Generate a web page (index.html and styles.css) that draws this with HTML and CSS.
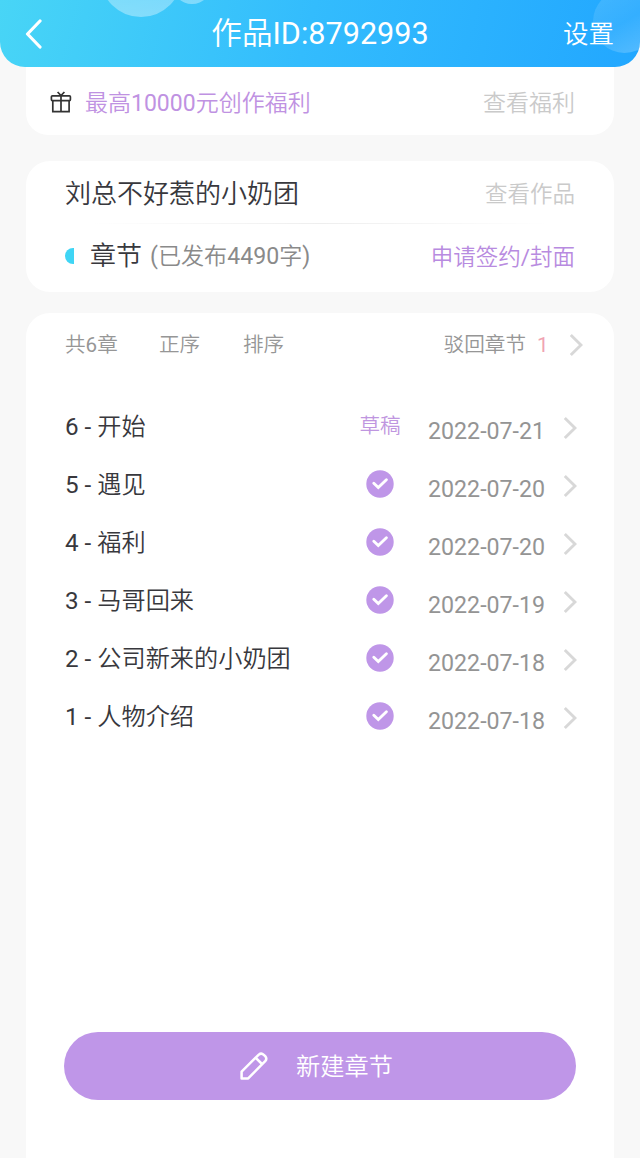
FILE: index.html
```html
<!DOCTYPE html>
<html lang="zh-CN">
<head>
    <meta charset="UTF-8">
    <meta name="viewport" content="width=device-width, initial-scale=1.0">
    <title>作品ID:8792993</title>
    <link rel="stylesheet" href="styles.css">
</head>
<body>
    <svg class="symbols">
        <symbol id="arrow" viewBox="0 0 14 24">
            <path d="M1.8 2 L12 12 L1.8 22" fill="none" stroke="currentColor" stroke-width="2.9"/>
        </symbol>
        <symbol id="check" viewBox="0 0 28 28">
            <circle cx="14" cy="14" r="13.7" fill="#bf96e8"/>
            <path d="M7.8 13.2 L12.3 17.5 L20.4 9.8" fill="none" stroke="#fff" stroke-width="2.9" stroke-linecap="round"/>
        </symbol>
    </svg>

    <header>
        <span class="bubble bubble-big"></span>
        <span class="bubble bubble-small"></span>
        <span class="bubble bubble-right"></span>
        <svg class="back" viewBox="0 0 18 32">
            <path d="M16 3 L3.5 16 L16 29" fill="none" stroke="#fff" stroke-width="3.2" stroke-linecap="round" stroke-linejoin="round"/>
        </svg>
        <h1>作品<span class="en">ID:8792993</span></h1>
        <span class="settings">设置</span>
    </header>

    <div class="card welfare">
        <svg class="gift" viewBox="0 0 22 22" fill="none" stroke="#333" stroke-width="1.7">
            <rect x="1.4" y="4.8" width="19" height="4.8" rx="1"/>
            <path d="M2.8 9.6 V20.6 H19.1 V9.6 M11 4.8 V20.6 M7.6 1 L11 4.6 L14.4 1"/>
        </svg>
        <span class="purple">最高<span class="en">10000</span>元创作福利</span>
        <span class="link">查看福利</span>
    </div>

    <div class="card work">
        <div class="work-row">
            <span class="name">刘总不好惹的小奶团</span>
            <span class="link">查看作品</span>
        </div>
        <div class="line"></div>
        <div class="work-row second">
            <span class="dot"></span>
            <span class="name">章节</span>
            <span class="count"><span class="en">(</span>已发布<span class="en">4490</span>字<span class="en">)</span></span>
            <span class="link purple">申请签约<span class="en">/</span>封面</span>
        </div>
    </div>

    <div class="card chapters">
        <div class="tools">
            <span class="total">共<span class="en">6</span>章</span>
            <span class="order">正序</span>
            <span>排序</span>
            <span class="reject">驳回章节</span>
            <span class="num en">1</span>
            <svg class="arrow"><use href="#arrow"/></svg>
        </div>
        <div class="list">
            <div class="item">
                <span class="title"><span class="en">6 - </span>开始</span>
                <span class="state">草稿</span>
                <span class="date en">2022-07-21</span>
                <svg class="arrow"><use href="#arrow"/></svg>
            </div>
            <div class="item">
                <span class="title"><span class="en">5 - </span>遇见</span>
                <span class="state"><svg class="check"><use href="#check"/></svg></span>
                <span class="date en">2022-07-20</span>
                <svg class="arrow"><use href="#arrow"/></svg>
            </div>
            <div class="item">
                <span class="title"><span class="en">4 - </span>福利</span>
                <span class="state"><svg class="check"><use href="#check"/></svg></span>
                <span class="date en">2022-07-20</span>
                <svg class="arrow"><use href="#arrow"/></svg>
            </div>
            <div class="item">
                <span class="title"><span class="en">3 - </span>马哥回来</span>
                <span class="state"><svg class="check"><use href="#check"/></svg></span>
                <span class="date en">2022-07-19</span>
                <svg class="arrow"><use href="#arrow"/></svg>
            </div>
            <div class="item">
                <span class="title"><span class="en">2 - </span>公司新来的小奶团</span>
                <span class="state"><svg class="check"><use href="#check"/></svg></span>
                <span class="date en">2022-07-18</span>
                <svg class="arrow"><use href="#arrow"/></svg>
            </div>
            <div class="item">
                <span class="title"><span class="en">1 - </span>人物介绍</span>
                <span class="state"><svg class="check"><use href="#check"/></svg></span>
                <span class="date en">2022-07-18</span>
                <svg class="arrow"><use href="#arrow"/></svg>
            </div>
        </div>
        <button class="new">
            <svg class="pencil" viewBox="0 0 28 28" fill="none" stroke="#fff" stroke-width="2.5" stroke-linejoin="round">
                <path d="M1.6 26.4 V19.6 L18.8 2.6 Q21.3 0.5 23.8 2.8 L25.2 4.2 Q27.4 6.7 25.2 9.2 L8.2 26.4 Z"/>
                <path d="M15.8 5.8 L22 12"/>
            </svg>
            <span>新建章节</span>
        </button>
    </div>
</body>
</html>
```
FILE: styles.css
```css
* {
    box-sizing: border-box;
}
body {
    margin: 0;
    height: 1158px;
    display: flex;
    flex-direction: column;
    overflow: hidden;
    background: #f8f8f8;
    color: #38383d;
    font-family: Roboto, "Noto Sans CJK SC", sans-serif;
    font-size: 23px;
    font-weight: 350;
    line-height: 1.2;
    white-space: nowrap;
}
svg {
    flex-shrink: 0;
}
.en {
    font-weight: 400;
}
.symbols {
    position: absolute;
    width: 0;
    height: 0;
}
header {
    position: relative;
    display: grid;
    grid-template-columns: 120px 1fr 120px;
    align-items: center;
    height: 67px;
    flex-shrink: 0;
    padding: 0 26px 0 24px;
    overflow: hidden;
    border-radius: 0 0 25px 25px;
    background: linear-gradient(105deg, #48d5f6 0%, #33bcfd 48%, #22a7ff 100%);
    color: #fff;
}
.back {
    width: 18px;
    height: 32px;
}
h1 {
    position: relative;
    margin: 0;
    padding-left: 2px;
    text-align: center;
    font-size: 30.6px;
    font-weight: inherit;
    line-height: 67px;
}
.settings {
    position: relative;
    padding-top: 1px;
    text-align: right;
    font-size: 25.5px;
}
.bubble {
    position: absolute;
    border-radius: 50%;
    background: linear-gradient(rgba(255, 255, 255, 0.2), rgba(255, 255, 255, 0.36));
}
.bubble-big {
    left: 100px;
    top: -65px;
    width: 82px;
    height: 82px;
}
.bubble-small {
    left: 172px;
    top: -36px;
    width: 40px;
    height: 40px;
}
.bubble-right {
    left: 593px;
    top: -10px;
    width: 63px;
    height: 63px;
    background: linear-gradient(150deg, rgba(255, 255, 255, 0.14), rgba(255, 255, 255, 0.08) 50%, rgba(255, 255, 255, 0.25));
}
.card {
    margin: 0 26px;
    border-radius: 24px;
    background: #fff;
}
.purple {
    color: #bf92e2;
}
.link {
    margin-left: auto;
    color: #cacaca;
}
.link.purple {
    color: #b88be0;
}
.welfare {
    display: flex;
    align-items: center;
    height: 68px;
    padding: 5px 39px 0 24px;
    border-radius: 0 0 22px 22px;
}
.gift {
    width: 22px;
    height: 22px;
    margin: 0 13px 4px 0;
}
.work {
    height: 131px;
    margin-top: 26px;
    padding: 0 39px;
}
.work-row {
    display: flex;
    align-items: center;
    height: 62px;
    padding-top: 5px;
    font-size: 22.5px;
}
.work-row.second {
    height: 64px;
    padding-top: 2px;
}
.name {
    font-size: 26px;
}
.line {
    height: 1px;
    background: linear-gradient(90deg, #fff 5%, #eee 50%, #fff 95%);
}
.dot {
    width: 9px;
    height: 16px;
    margin: 0 16px 3px 0;
    border-radius: 9px 0 0 9px;
    background: #3fd5f5;
}
.count {
    margin-left: 8px;
    font-size: 23.1px;
    color: #8a8a8a;
}
.chapters {
    display: flex;
    flex: 1;
    flex-direction: column;
    margin-top: 21px;
    padding: 0 38px 0 39px;
    border-radius: 24px 24px 0 0;
}
.tools {
    display: flex;
    align-items: center;
    height: 64px;
    margin-right: -7px;
    font-size: 20.6px;
    color: #969696;
}
.total {
    width: 94px;
}
.order {
    width: 84px;
}
.reject {
    margin-left: auto;
}
.num {
    width: 32px;
    margin-left: 11px;
    color: #f0a3b2;
}
.arrow {
    width: 14px;
    height: 24px;
    color: #d8d8d8;
}
.list {
    margin-top: 21px;
}
.item {
    display: grid;
    grid-template-columns: 285px 60px 18px 134px 14px;
    align-items: center;
    height: 58px;
    font-size: 24.2px;
}
.title {
    padding-top: 2px;
}
.state {
    display: flex;
    justify-content: center;
    padding-bottom: 1px;
    font-size: 20.6px;
    color: #bf96e0;
}
.check {
    width: 28px;
    height: 28px;
    margin-bottom: 1px;
}
.date {
    grid-column: 4;
    padding-top: 9px;
    font-size: 23.2px;
    color: #949494;
}
.item .arrow {
    margin: 1px 0 0 1px;
}
.new {
    display: flex;
    align-items: center;
    justify-content: center;
    gap: 28px;
    width: 512px;
    height: 68px;
    margin: auto 0 58px -1px;
    padding: 4px 7px 0 0;
    border: none;
    border-radius: 34px;
    background: #bf96e8;
    color: #fff;
    font: inherit;
    font-size: 24.2px;
}
.pencil {
    width: 28px;
    height: 28px;
    margin-bottom: 4px;
}
```
